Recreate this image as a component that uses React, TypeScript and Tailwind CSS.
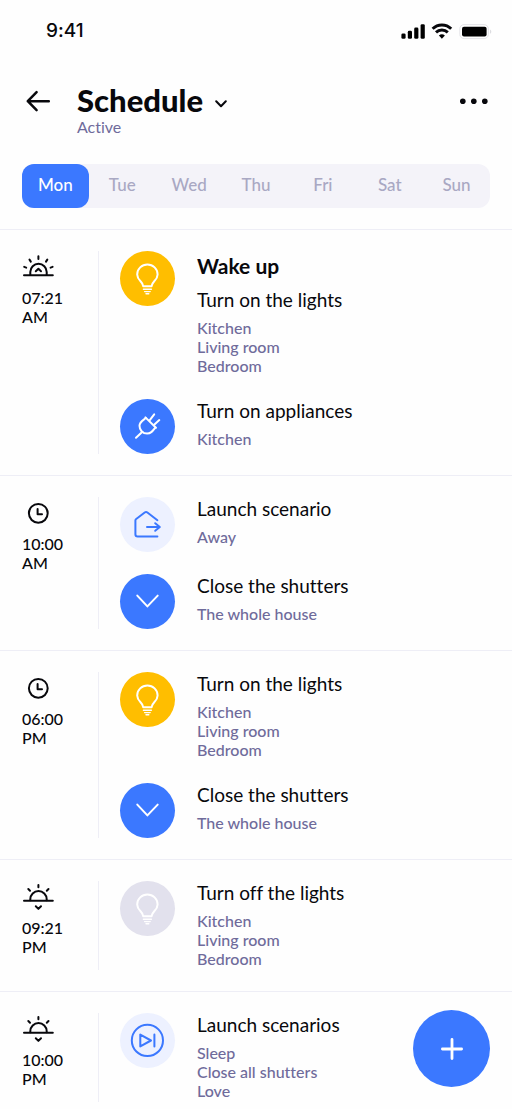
import { useState } from "react";
import type { ReactNode } from "react";

type TimeIcon = "sunrise" | "sunset" | "clock";
type ActionIcon = "bulb" | "plug" | "leave" | "down" | "play";
type Tone = "yellow" | "blue" | "pale" | "off";

interface Action {
  icon: ActionIcon;
  tone: Tone;
  title: string;
  targets: string[];
}

interface Entry {
  time: string;
  period: string;
  icon: TimeIcon;
  name?: string;
  actions: Action[];
}

const DAYS = ["Mon", "Tue", "Wed", "Thu", "Fri", "Sat", "Sun"];

const ROOMS = ["Kitchen", "Living room", "Bedroom"];

const ENTRIES: Entry[] = [
  {
    time: "07:21",
    period: "AM",
    icon: "sunrise",
    name: "Wake up",
    actions: [
      { icon: "bulb", tone: "yellow", title: "Turn on the lights", targets: ROOMS },
      { icon: "plug", tone: "blue", title: "Turn on appliances", targets: ["Kitchen"] },
    ],
  },
  {
    time: "10:00",
    period: "AM",
    icon: "clock",
    actions: [
      { icon: "leave", tone: "pale", title: "Launch scenario", targets: ["Away"] },
      { icon: "down", tone: "blue", title: "Close the shutters", targets: ["The whole house"] },
    ],
  },
  {
    time: "06:00",
    period: "PM",
    icon: "clock",
    actions: [
      { icon: "bulb", tone: "yellow", title: "Turn on the lights", targets: ROOMS },
      { icon: "down", tone: "blue", title: "Close the shutters", targets: ["The whole house"] },
    ],
  },
  {
    time: "09:21",
    period: "PM",
    icon: "sunset",
    actions: [{ icon: "bulb", tone: "off", title: "Turn off the lights", targets: ROOMS }],
  },
  {
    time: "10:00",
    period: "PM",
    icon: "sunset",
    actions: [
      { icon: "play", tone: "pale", title: "Launch scenarios", targets: ["Sleep", "Close all shutters", "Love"] },
    ],
  },
];

const TONES: Record<Tone, string> = {
  yellow: "bg-[#ffbe00] text-white",
  blue: "bg-[#3b78ff] text-white",
  pale: "bg-[#edf1ff] text-[#3b78ff]",
  off: "bg-[#e2e1ed] text-white",
};

const TIME_ICONS: Record<TimeIcon, ReactNode> = {
  sunrise: (
    <>
      <path d="M2 24.3H30.8" />
      <path d="M8.3 24V21a8.2 8.2 0 0 1 16.4 0v3" />
      <path d="M16.4 5.2V8M7.5 8.6l1.3 2M25.3 8.6l-1.3 2M2.2 15.9l2 .7M30.6 15.9l-2 .7" />
      <path d="M13.8 20.2l2.6-2.4 2.6 2.4" />
    </>
  ),
  sunset: (
    <>
      <path d="M2 19.7H30.8" />
      <path d="M8.3 19.3v-1a8.2 8.2 0 0 1 16.4 0v1" />
      <path d="M16.4 4V6.3M6.3 8l1.7 1.7M26.5 8l-1.7 1.7" />
      <path d="M13.8 25.3l2.6 2.6 2.6-2.6" />
    </>
  ),
  clock: (
    <>
      <circle cx="16.3" cy="16.3" r="9.4" />
      <path d="M15.6 12V17.2H20" />
    </>
  ),
};

const ACTION_ICONS: Record<ActionIcon, ReactNode> = {
  bulb: (
    <>
      <path d="M23.2 35.2C23.2 30.6 17.2 29.6 17.2 23.4a10.2 9.9 0 0 1 20.4 0C37.6 29.6 31.6 30.6 31.6 35.2Z" />
      <path d="M23.4 38.2h8M24.6 40.6h5.6M26 42.8h2.8" strokeWidth="1.4" />
    </>
  ),
  plug: (
    <>
      <path d="M16 38.8L22.4 32.8" />
      <path d="M25.4 18.4L36 28.8" />
      <path d="M26 19C22 22 19.5 23 19.5 26.8c0 4.6 3.4 7.8 7.6 7.8 4 0 5.4-2.4 8.2-6" />
      <path d="M29.8 21.2L34.2 15.4M34.2 25.8L39.3 21.1" />
    </>
  ),
  leave: (
    <>
      <path d="M37.4 23.2L27.4 15.5a2.2 2.2 0 0 0-2.7 0L16.2 22a2 2 0 0 0-.8 1.6V37.2a2.2 2.2 0 0 0 2.2 2.2H37.4" />
      <path d="M27 30H39.6M35.2 26.2L39.8 30l-4.6 3.8" />
    </>
  ),
  down: <path d="M17.3 21.6L27.4 32.4 37.7 21.6" />,
  play: (
    <>
      <circle cx="27.4" cy="27.4" r="15.6" />
      <path d="M20.3 21.6V33.4L31 27.5ZM34.4 21.4V33.6" />
    </>
  ),
};

function StatusBar() {
  return (
    <div className="flex h-[62px] items-center justify-between pr-5 pl-[46px]">
      <span className="font-['Inter'] text-[19px] font-medium">9:41</span>
      <svg width="92" height="18" viewBox="0 0 92 18" aria-hidden="true">
        <rect x="1.4" y="11.4" width="4.2" height="5.4" rx="1.4" />
        <rect x="7.8" y="8.8" width="4.2" height="8" rx="1.4" />
        <rect x="14.2" y="5.6" width="4.2" height="11.2" rx="1.4" />
        <rect x="20.6" y="2.2" width="4.2" height="14.6" rx="1.4" />
        <g fill="none" stroke="currentColor" strokeWidth="2.9">
          <path d="M32.6 6.8a13.2 13.2 0 0 1 18.6 0" />
          <path d="M36 10.4a8.4 8.4 0 0 1 11.8 0" />
        </g>
        <path d="M38.9 13.6a4.4 4.4 0 0 1 6 0L41.9 16.8Z" />
        <rect x="59.8" y="2.6" width="28.6" height="14" rx="4.2" fill="none" stroke="#e4e4e8" />
        <rect x="62" y="4.8" width="24.6" height="9.8" rx="2" />
        <path d="M90 7.4v4.4c1.8-.8 1.8-3.6 0-4.4" fill="#dcdce0" />
      </svg>
    </div>
  );
}

function ActionRow({ action, name }: { action: Action; name?: string }) {
  return (
    <li className="flex gap-[22px]">
      <span className={`flex size-[55px] shrink-0 items-center justify-center rounded-full ${TONES[action.tone]}`}>
        <svg
          viewBox="0 0 55 55"
          className="size-full"
          fill="none"
          stroke="currentColor"
          strokeWidth="2"
          strokeLinecap="round"
          strokeLinejoin="round"
          aria-hidden="true"
        >
          {ACTION_ICONS[action.icon]}
        </svg>
      </span>
      <div className="min-w-0 pb-0.5">
        {name && <h2 className="mb-[7px] text-[21px] leading-[30px] font-bold">{name}</h2>}
        <h3 className="text-[19px] leading-6">{action.title}</h3>
        <ul className="mt-1.5 text-[16px] leading-[19px] font-medium text-[#6f6b9b]">
          {action.targets.map((target) => (
            <li key={target}>{target}</li>
          ))}
        </ul>
      </div>
    </li>
  );
}

function ScheduleEntry({ entry }: { entry: Entry }) {
  return (
    <section className="flex border-b border-[#eeeef6] px-[22px] py-[21px] last:border-b-0 last:pb-0">
      <div className="w-[76px] shrink-0">
        <svg
          viewBox="0 0 32 32"
          className="size-8"
          fill="none"
          stroke="currentColor"
          strokeWidth="2"
          strokeLinecap="round"
          strokeLinejoin="round"
          aria-hidden="true"
        >
          {TIME_ICONS[entry.icon]}
        </svg>
        <p className="mt-[5px] text-[16px] leading-[19px] font-medium">
          {entry.time}
          <br />
          {entry.period}
        </p>
      </div>
      <ul className="flex flex-1 flex-col gap-[22px] border-l border-[#eeeef6] pl-[21px]">
        {entry.actions.map((action, i) => (
          <ActionRow key={action.title} action={action} name={i === 0 ? entry.name : undefined} />
        ))}
      </ul>
    </section>
  );
}

export default function App() {
  const [day, setDay] = useState("Mon");

  return (
    <div className="min-h-screen bg-[#fefefe] font-['Lato','Liberation_Sans',sans-serif] text-[#08080c] [font-variant-ligatures:none]">
      <StatusBar />

      <header className="border-b border-[#eeeef6] px-[22px] pt-5 pb-[21px]">
        <div className="flex items-start">
          <button type="button" aria-label="Back" className="mt-1 w-[55px] shrink-0">
            <svg
              width="32"
              height="32"
              viewBox="0 0 32 32"
              fill="none"
              stroke="currentColor"
              strokeWidth="2.5"
              strokeLinecap="round"
              strokeLinejoin="round"
            >
              <path d="M26.8 15.2H5.8M14.6 6.2L5.8 15.2l8.8 9" />
            </svg>
          </button>
          <div className="flex-1">
            <button type="button" className="flex items-center gap-3 text-left">
              <h1 className="text-[31px] leading-9 font-black">Schedule</h1>
              <svg
                width="12"
                height="8"
                viewBox="0 0 12 8"
                className="mt-2"
                fill="none"
                stroke="currentColor"
                strokeWidth="2"
                strokeLinecap="round"
                strokeLinejoin="round"
                aria-hidden="true"
              >
                <path d="M1.2 1.2L6 6.2l4.8-5" />
              </svg>
            </button>
            <p className="text-[16px] leading-[18px] text-[#6f6b9b]">Active</p>
          </div>
          <button type="button" aria-label="More options" className="mt-1">
            <svg width="32" height="32" viewBox="0 0 32 32" fill="currentColor">
              <circle cx="4.8" cy="15.2" r="2.8" />
              <circle cx="15.8" cy="15.2" r="2.8" />
              <circle cx="26.8" cy="15.2" r="2.8" />
            </svg>
          </button>
        </div>

        <div className="mt-7 flex h-11 rounded-xl bg-[#f4f3f9]">
          {DAYS.map((d) => (
            <button
              key={d}
              type="button"
              aria-pressed={d === day}
              onClick={() => setDay(d)}
              className={`flex-1 rounded-xl pb-0.5 text-[17px] font-medium ${
                d === day ? "bg-[#3b78ff] text-white" : "text-[#a9a8c3]"
              }`}
            >
              {d}
            </button>
          ))}
        </div>
      </header>

      <main>
        {ENTRIES.map((entry) => (
          <ScheduleEntry key={entry.time + entry.period} entry={entry} />
        ))}
      </main>

      <button
        type="button"
        aria-label="Add to schedule"
        className="fixed right-[22px] bottom-[22px] flex size-[77px] items-center justify-center rounded-full bg-[#3b78ff] text-white"
      >
        <svg width="24" height="24" viewBox="0 0 24 24" stroke="currentColor" strokeWidth="2.8" strokeLinecap="round">
          <path d="M12 2.4V21.6M2.4 12H21.6" />
        </svg>
      </button>
    </div>
  );
}
